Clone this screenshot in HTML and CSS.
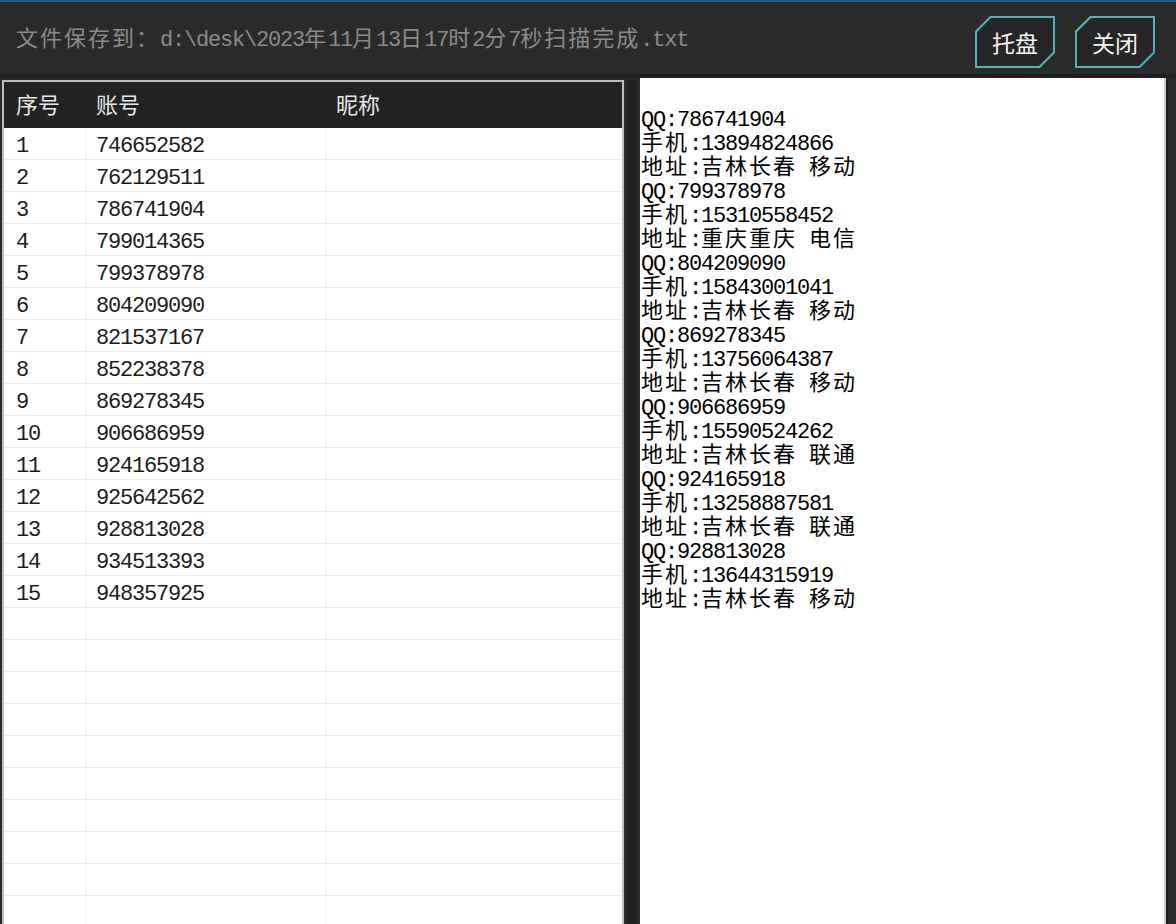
FILE: index.html
```html
<!DOCTYPE html>
<html lang="zh-CN">
<head>
<meta charset="utf-8">
<title>扫描结果</title>
<link rel="stylesheet" href="styles.css">
</head>
<body>
<div class="app">
  <div class="topline"></div>
  <div class="titlebar">
    <div class="title"><span class="c">文件保存到：</span>d:\desk\2023<span class="c">年</span>11<span class="c">月</span>13<span class="c">日</span>17<span class="c">时</span>2<span class="c">分</span>7<span class="c">秒扫描完成</span>.txt</div>
    <div class="btns">
      <div class="btn"><div class="btn-in">托盘</div></div>
      <div class="btn"><div class="btn-in">关闭</div></div>
    </div>
  </div>
  <div class="sep"></div>
  <div class="main">
    <div class="left">
      <div class="thead">
        <div class="th">序号</div>
        <div class="th">账号</div>
        <div class="th">昵称</div>
      </div>
      <div class="row"><div class="td">1</div><div class="td">746652582</div><div class="td"></div></div>
      <div class="row"><div class="td">2</div><div class="td">762129511</div><div class="td"></div></div>
      <div class="row"><div class="td">3</div><div class="td">786741904</div><div class="td"></div></div>
      <div class="row"><div class="td">4</div><div class="td">799014365</div><div class="td"></div></div>
      <div class="row"><div class="td">5</div><div class="td">799378978</div><div class="td"></div></div>
      <div class="row"><div class="td">6</div><div class="td">804209090</div><div class="td"></div></div>
      <div class="row"><div class="td">7</div><div class="td">821537167</div><div class="td"></div></div>
      <div class="row"><div class="td">8</div><div class="td">852238378</div><div class="td"></div></div>
      <div class="row"><div class="td">9</div><div class="td">869278345</div><div class="td"></div></div>
      <div class="row"><div class="td">10</div><div class="td">906686959</div><div class="td"></div></div>
      <div class="row"><div class="td">11</div><div class="td">924165918</div><div class="td"></div></div>
      <div class="row"><div class="td">12</div><div class="td">925642562</div><div class="td"></div></div>
      <div class="row"><div class="td">13</div><div class="td">928813028</div><div class="td"></div></div>
      <div class="row"><div class="td">14</div><div class="td">934513393</div><div class="td"></div></div>
      <div class="row"><div class="td">15</div><div class="td">948357925</div><div class="td"></div></div>
      <div class="row"><div class="td"></div><div class="td"></div><div class="td"></div></div>
      <div class="row"><div class="td"></div><div class="td"></div><div class="td"></div></div>
      <div class="row"><div class="td"></div><div class="td"></div><div class="td"></div></div>
      <div class="row"><div class="td"></div><div class="td"></div><div class="td"></div></div>
      <div class="row"><div class="td"></div><div class="td"></div><div class="td"></div></div>
      <div class="row"><div class="td"></div><div class="td"></div><div class="td"></div></div>
      <div class="row"><div class="td"></div><div class="td"></div><div class="td"></div></div>
      <div class="row"><div class="td"></div><div class="td"></div><div class="td"></div></div>
      <div class="row"><div class="td"></div><div class="td"></div><div class="td"></div></div>
      <div class="row"><div class="td"></div><div class="td"></div><div class="td"></div></div>
      <div class="row"><div class="td"></div><div class="td"></div><div class="td"></div></div>
    </div>
    <div class="splitter"></div>
    <div class="right">
      <div class="ln">QQ:786741904</div>
      <div class="ln"><span class="c">手机</span>:13894824866</div>
      <div class="ln"><span class="c">地址</span>:<span class="c">吉林长春</span> <span class="c">移动</span></div>
      <div class="ln">QQ:799378978</div>
      <div class="ln"><span class="c">手机</span>:15310558452</div>
      <div class="ln"><span class="c">地址</span>:<span class="c">重庆重庆</span> <span class="c">电信</span></div>
      <div class="ln">QQ:804209090</div>
      <div class="ln"><span class="c">手机</span>:15843001041</div>
      <div class="ln"><span class="c">地址</span>:<span class="c">吉林长春</span> <span class="c">移动</span></div>
      <div class="ln">QQ:869278345</div>
      <div class="ln"><span class="c">手机</span>:13756064387</div>
      <div class="ln"><span class="c">地址</span>:<span class="c">吉林长春</span> <span class="c">移动</span></div>
      <div class="ln">QQ:906686959</div>
      <div class="ln"><span class="c">手机</span>:15590524262</div>
      <div class="ln"><span class="c">地址</span>:<span class="c">吉林长春</span> <span class="c">联通</span></div>
      <div class="ln">QQ:924165918</div>
      <div class="ln"><span class="c">手机</span>:13258887581</div>
      <div class="ln"><span class="c">地址</span>:<span class="c">吉林长春</span> <span class="c">联通</span></div>
      <div class="ln">QQ:928813028</div>
      <div class="ln"><span class="c">手机</span>:13644315919</div>
      <div class="ln"><span class="c">地址</span>:<span class="c">吉林长春</span> <span class="c">移动</span></div>
    </div>
    <div class="edge"></div>
  </div>
</div>
</body>
</html>
```

FILE: styles.css
```css
html, body {
  margin: 0;
  padding: 0;
}
body {
  width: 1176px;
  height: 924px;
  overflow: hidden;
  background: #2a2a2a;
  font-family: "Liberation Mono", "Noto Sans CJK SC", monospace;
}
.c {
  font-family: "Noto Sans CJK SC", sans-serif;
  letter-spacing: 2px;
  line-height: 12px;
}
.app {
  display: flex;
  flex-direction: column;
  height: 924px;
}
.topline {
  flex: none;
  height: 2px;
  background: #1d5e96;
}
.titlebar {
  flex: none;
  height: 72px;
  display: flex;
  align-items: flex-start;
  padding: 0 21px 0 16px;
  background: #2a2a2a;
}
.title {
  flex: 1;
  margin-top: 27px;
  font-size: 22px;
  line-height: 24px;
  letter-spacing: -1.2px;
  color: #8a8a8a;
  white-space: nowrap;
}
.btns {
  display: flex;
  gap: 20px;
  margin-top: 14px;
}
.btn {
  width: 80px;
  height: 52px;
  padding: 2px;
  box-sizing: border-box;
  background: #4cb2bb;
  clip-path: polygon(15px 0, 100% 0, 100% calc(100% - 15px), calc(100% - 15px) 100%, 0 100%, 0 15px);
}
.btn-in {
  height: 100%;
  display: flex;
  align-items: center;
  justify-content: center;
  background: #262626;
  clip-path: polygon(14px 0, 100% 0, 100% calc(100% - 14px), calc(100% - 14px) 100%, 0 100%, 0 14px);
  color: #f4f4f4;
  font-family: "Noto Sans CJK SC", sans-serif;
  font-size: 23px;
  line-height: 24px;
}
.sep {
  flex: none;
  height: 4px;
  background: #1f1f1f;
}
.main {
  flex: 1;
  min-height: 0;
  display: flex;
  padding: 2px 0 0 2px;
}
.left {
  flex: none;
  width: 622px;
  box-sizing: border-box;
  border: 2px solid #bdbdbd;
  border-bottom: none;
  background: #fff;
  overflow: hidden;
}
.thead {
  display: grid;
  grid-template-columns: 82px 240px 1fr;
  height: 46px;
  background: #222;
}
.th {
  display: flex;
  align-items: center;
  padding-left: 10px;
  padding-bottom: 4px;
  font-family: "Noto Sans CJK SC", sans-serif;
  font-size: 22px;
  color: #e6e6e6;
}
.th:first-child {
  padding-left: 12px;
}
.row {
  display: grid;
  grid-template-columns: 82px 240px 1fr;
  height: 32px;
  box-sizing: border-box;
  border-bottom: 1px solid #ececec;
}
.td {
  display: flex;
  align-items: center;
  padding-left: 10px;
  padding-top: 6px;
  font-size: 22px;
  letter-spacing: -1.2px;
  color: #1c1c1c;
  border-right: 1px solid #ececec;
}
.td:first-child {
  padding-left: 12px;
}
.td:last-child {
  border-right: none;
}
.splitter {
  flex: none;
  width: 16px;
  background: linear-gradient(to right, #2a2a2a 0 3px, #1f1f1f 3px 13px, #2a2a2a 13px);
}
.right {
  flex: none;
  width: 526px;
  box-sizing: border-box;
  margin-top: -2px;
  padding: 31px 0 0 1px;
  background: #fff;
  border-right: 2px solid #cfcfcf;
}
.ln {
  height: 24px;
  font-size: 22px;
  line-height: 24px;
  letter-spacing: -1.2px;
  color: #000;
  white-space: pre;
}
.edge {
  flex: 1;
  background: linear-gradient(to right, #1f1f1f 0 2px, #2a2a2a 2px);
}
```
